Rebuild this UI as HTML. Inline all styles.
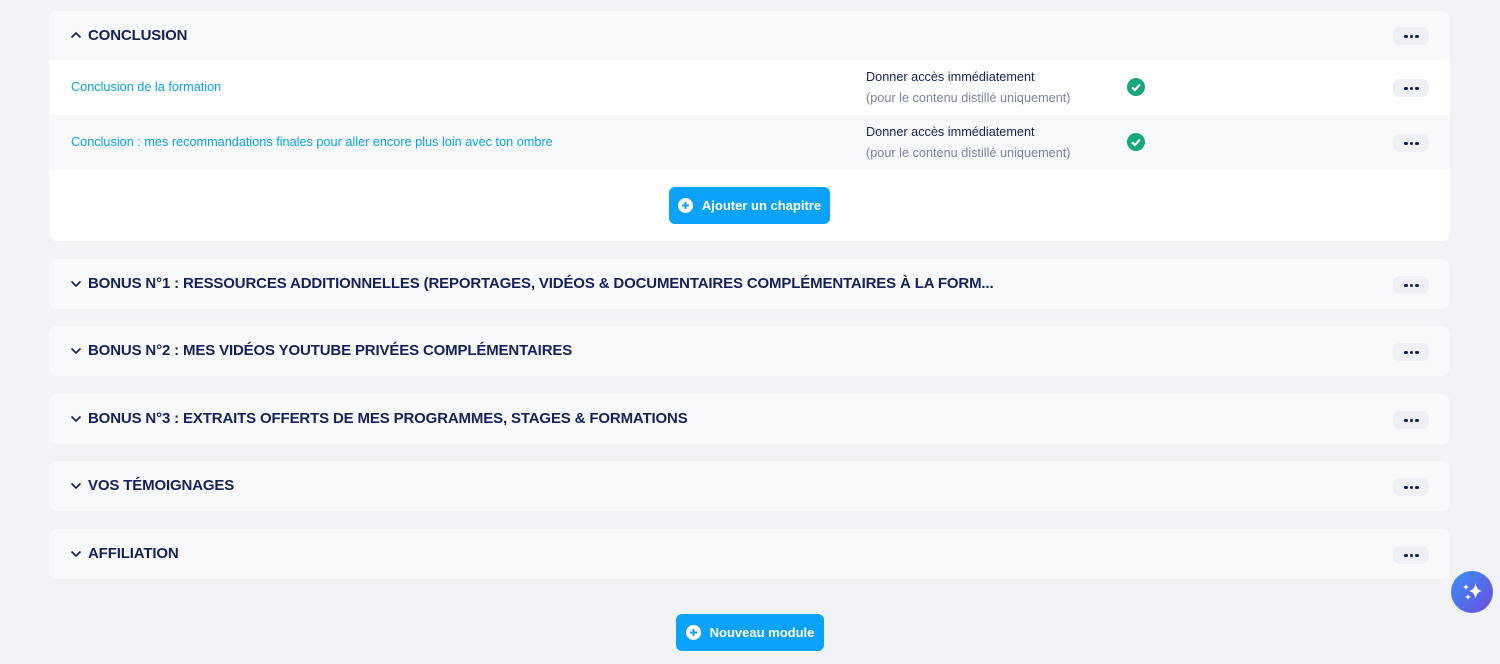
<!DOCTYPE html>
<html><head><meta charset="utf-8"><style>
*{box-sizing:border-box;margin:0;padding:0}
body{width:1500px;height:664px;background:#f2f3f7;font-family:"Liberation Sans",sans-serif;position:relative;overflow:hidden}
.card{position:absolute;left:49px;width:1401px;background:#f8f9fb;border-radius:8px;overflow:hidden}
.hd{height:50px;position:relative}
.hd .t{position:absolute;left:39px;top:0;line-height:50px;font-weight:bold;font-size:15px;color:#14215a;letter-spacing:-0.15px}
.hd svg.ch{position:absolute;left:21px;top:20px}
.dots{position:absolute;left:1344px;width:36px;height:18px;border-radius:7px;background:#eef0f5}
.dots i{position:absolute;top:7.5px;width:3.5px;height:3.5px;border-radius:50%;background:#14215a}
.row{position:absolute;left:0;width:1401px;height:54px}
.row .l{position:absolute;left:22px;top:0;line-height:54px;font-size:12.7px;color:#0ba0f5}
.row .a{position:absolute;left:817px;top:10px;font-size:12.7px;color:#14215a}
.row .b{position:absolute;left:817px;top:31px;font-size:12.7px;color:#7b84a3}
.row .ok{position:absolute;left:1078px;top:18px}
.btn{position:absolute;background:#0ba2fb;border-radius:6px;color:#fff;font-weight:bold;font-size:13px;display:flex;align-items:center;justify-content:center;gap:9px}
</style></head><body>

<div class="card" style="top:11px;height:230px;background:#fff">
 <div class="hd" style="background:#f8f9fb"><svg class="ch" width="12" height="9" viewBox="0 0 12 9"><path d="M1.5 6.5 L6 2 L10.5 6.5" stroke="#14215a" stroke-width="1.6" fill="none"/></svg><div class="t">CONCLUSION</div><div class="dots" style="top:16px"><i style="left:11px"></i><i style="left:16.5px"></i><i style="left:22px"></i></div></div>
 <div class="row" style="top:49px;background:#fff"><div class="l">Conclusion de la formation</div><div class="a">Donner accès immédiatement</div><div class="b">(pour le contenu distillé uniquement)</div>
 <svg class="ok" width="18" height="18" viewBox="0 0 18 18"><circle cx="9" cy="9" r="9" fill="#16a77b"/><path d="M5 9.3 L7.8 12 L13 6.5" stroke="#fff" stroke-width="2.2" fill="none"/></svg>
 <div class="dots" style="top:19px"><i style="left:11px"></i><i style="left:16.5px"></i><i style="left:22px"></i></div></div>
 <div class="row" style="top:104px;background:#f8f9fb"><div class="l">Conclusion : mes recommandations finales pour aller encore plus loin avec ton ombre</div><div class="a">Donner accès immédiatement</div><div class="b">(pour le contenu distillé uniquement)</div>
 <svg class="ok" width="18" height="18" viewBox="0 0 18 18"><circle cx="9" cy="9" r="9" fill="#16a77b"/><path d="M5 9.3 L7.8 12 L13 6.5" stroke="#fff" stroke-width="2.2" fill="none"/></svg>
 <div class="dots" style="top:19px"><i style="left:11px"></i><i style="left:16.5px"></i><i style="left:22px"></i></div></div>
</div>
<div class="btn" style="left:669px;top:187px;width:161px;height:37px"><svg width="15" height="15" viewBox="0 0 15 15"><circle cx="7.5" cy="7.5" r="7.5" fill="#fff"/><path d="M7.5 4v7M4 7.5h7" stroke="#0ba2fb" stroke-width="2"/></svg>Ajouter un chapitre</div>

<div class="card" style="top:259px;height:50px"><div class="hd"><svg class="ch" width="12" height="9" viewBox="0 0 12 9"><path d="M1.5 2.5 L6 7 L10.5 2.5" stroke="#14215a" stroke-width="1.6" fill="none"/></svg><div class="t">BONUS N°1 : RESSOURCES ADDITIONNELLES (REPORTAGES, VIDÉOS &amp; DOCUMENTAIRES COMPLÉMENTAIRES À LA FORM...</div><div class="dots" style="top:17px"><i style="left:11px"></i><i style="left:16.5px"></i><i style="left:22px"></i></div></div></div>
<div class="card" style="top:326px;height:50px"><div class="hd"><svg class="ch" width="12" height="9" viewBox="0 0 12 9"><path d="M1.5 2.5 L6 7 L10.5 2.5" stroke="#14215a" stroke-width="1.6" fill="none"/></svg><div class="t">BONUS N°2 : MES VIDÉOS YOUTUBE PRIVÉES COMPLÉMENTAIRES</div><div class="dots" style="top:17px"><i style="left:11px"></i><i style="left:16.5px"></i><i style="left:22px"></i></div></div></div>
<div class="card" style="top:394px;height:50px"><div class="hd"><svg class="ch" width="12" height="9" viewBox="0 0 12 9"><path d="M1.5 2.5 L6 7 L10.5 2.5" stroke="#14215a" stroke-width="1.6" fill="none"/></svg><div class="t">BONUS N°3 : EXTRAITS OFFERTS DE MES PROGRAMMES, STAGES &amp; FORMATIONS</div><div class="dots" style="top:17px"><i style="left:11px"></i><i style="left:16.5px"></i><i style="left:22px"></i></div></div></div>
<div class="card" style="top:461px;height:50px"><div class="hd"><svg class="ch" width="12" height="9" viewBox="0 0 12 9"><path d="M1.5 2.5 L6 7 L10.5 2.5" stroke="#14215a" stroke-width="1.6" fill="none"/></svg><div class="t">VOS TÉMOIGNAGES</div><div class="dots" style="top:17px"><i style="left:11px"></i><i style="left:16.5px"></i><i style="left:22px"></i></div></div></div>
<div class="card" style="top:529px;height:50px"><div class="hd"><svg class="ch" width="12" height="9" viewBox="0 0 12 9"><path d="M1.5 2.5 L6 7 L10.5 2.5" stroke="#14215a" stroke-width="1.6" fill="none"/></svg><div class="t">AFFILIATION</div><div class="dots" style="top:17px"><i style="left:11px"></i><i style="left:16.5px"></i><i style="left:22px"></i></div></div></div>

<div class="btn" style="left:676px;top:614px;width:148px;height:37px"><svg width="15" height="15" viewBox="0 0 15 15"><circle cx="7.5" cy="7.5" r="7.5" fill="#fff"/><path d="M7.5 4v7M4 7.5h7" stroke="#0ba2fb" stroke-width="2"/></svg>Nouveau module</div>

<svg style="position:absolute;left:1451px;top:571px" width="42" height="42" viewBox="0 0 42 42"><defs><linearGradient id="g" x1="0" y1="0" x2="1" y2="1"><stop offset="0" stop-color="#3a8ef6"/><stop offset="1" stop-color="#6a4ee0"/></linearGradient></defs><circle cx="21" cy="21" r="21" fill="url(#g)"/><path d="M24.5 12 Q25.5 19 31 20 Q25.5 21 24.5 28 Q23.5 21 18 20 Q23.5 19 24.5 12Z" fill="#fff"/><path d="M15 13 Q15.4 15.6 18 16 Q15.4 16.4 15 19 Q14.6 16.4 12 16 Q14.6 15.6 15 13Z" fill="#fff"/><path d="M17 23 Q17.4 25.6 20 26 Q17.4 26.4 17 29 Q16.6 26.4 14 26 Q16.6 25.6 17 23Z" fill="#fff"/></svg>
</body></html>
